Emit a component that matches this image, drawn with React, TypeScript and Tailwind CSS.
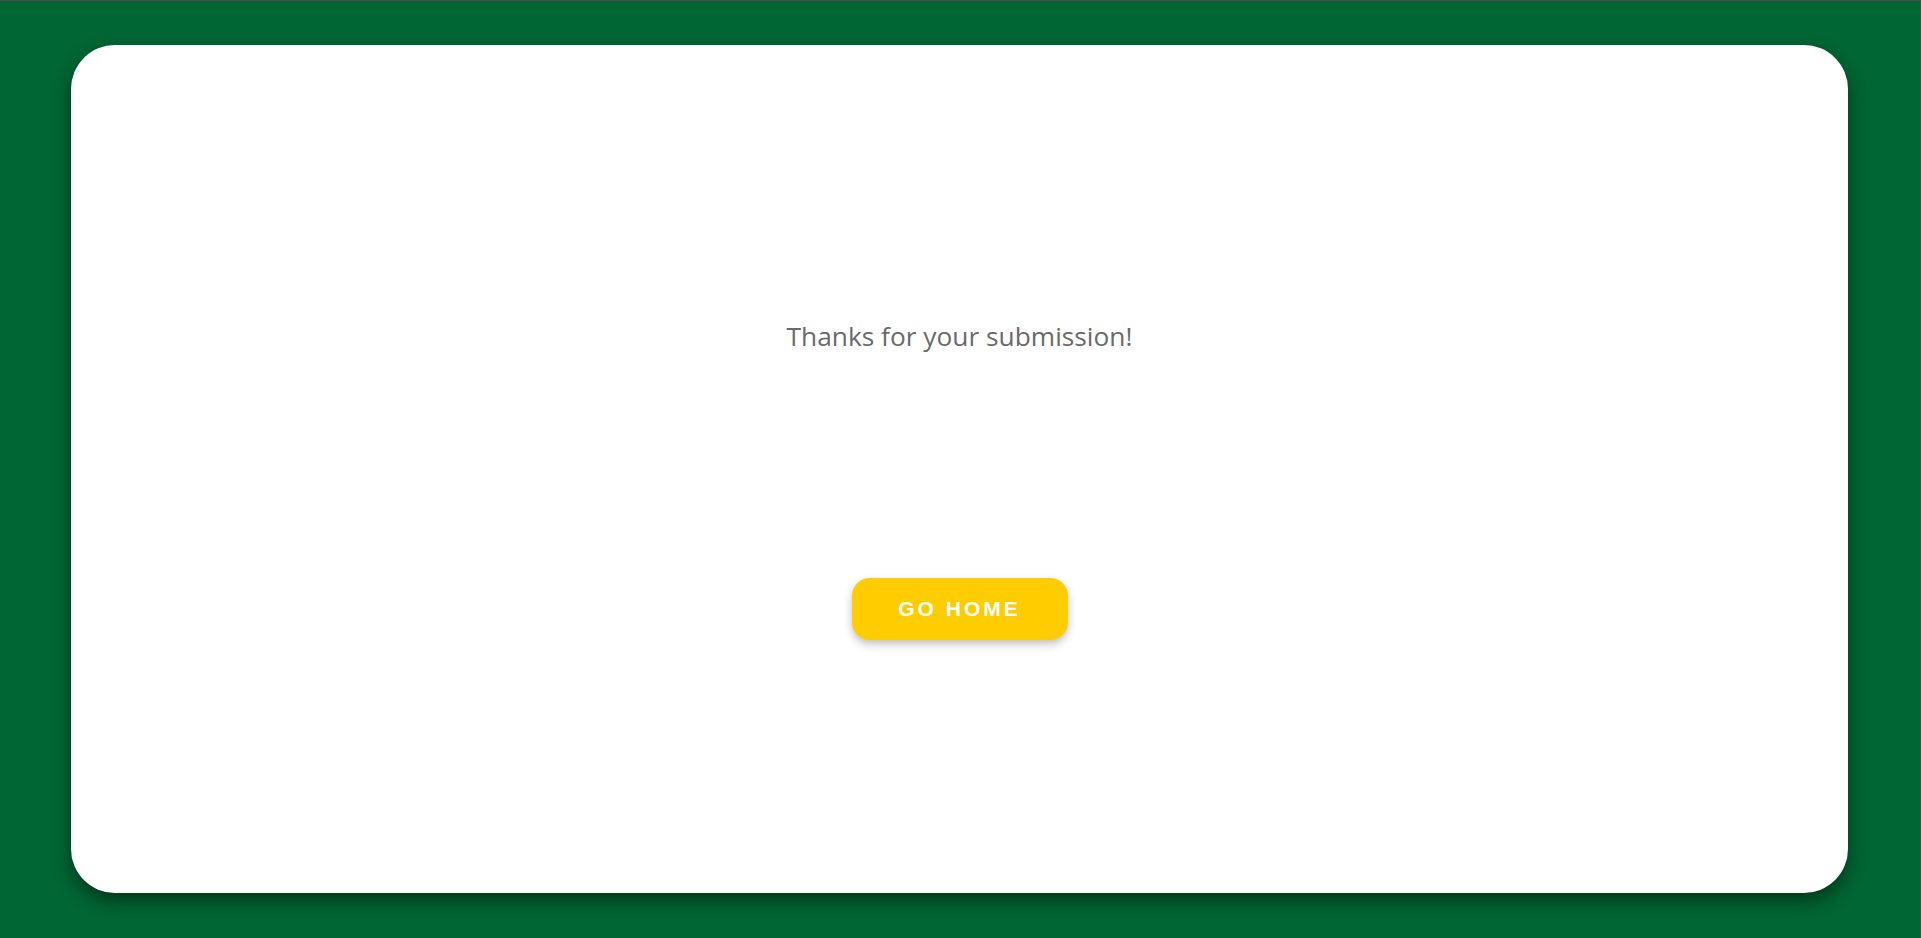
export default function App() {
  return (
    <div className="h-screen w-full bg-[#006633] border-t border-r border-[#4a4a4a] px-[71px] pt-[44px] pb-[46px]">
      {/* White card */}
      <div className="h-[848px] w-[1777px] bg-white rounded-[44px] shadow-[0_8px_18px_rgba(0,0,0,0.45)] flex flex-col items-center pt-[272px]">
        <p
          className="text-[26.3px] leading-[39px] text-[#6a6a6a]"
          style={{ fontFamily: '"Open Sans", "Noto Sans", sans-serif' }}
        >
          Thanks for your submission!
        </p>
        <button
          className="mt-[222px] w-[216px] h-[62px] rounded-[18px] bg-[#ffcc00] text-white font-bold text-[21px] tracking-[3px] shadow-[0_4px_8px_rgba(0,0,0,0.25)]"
          style={{ fontFamily: '"Liberation Sans", Arial, sans-serif' }}
        >
          GO HOME
        </button>
      </div>
    </div>
  );
}
